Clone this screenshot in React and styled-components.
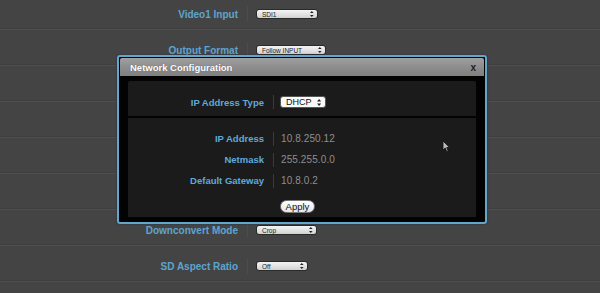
import styled, { createGlobalStyle } from "styled-components";

const GlobalStyle = createGlobalStyle`
  html, body {
    margin: 0;
    padding: 0;
    background: #444444;
  }
  body {
    font-family: "Liberation Sans", Arial, sans-serif;
  }
`;

const Page = styled.div`
  position: relative;
  width: 600px;
  height: 293px;
  overflow: hidden;
  background: #444444;
`;

const RowList = styled.div`
  margin-top: -6px;
`;

const Row = styled.div`
  display: flex;
  align-items: center;
  box-sizing: border-box;
  height: 36px;
  padding-top: 5px;
  border-bottom: 1px solid #4e4e4e;
  box-shadow: inset 0 -1px 0 #3f3f3f;
`;

const Label = styled.div`
  width: 238px;
  text-align: right;
  font-size: 10px;
  font-weight: bold;
  color: #5ea4d0;
  white-space: nowrap;
`;

const Divider = styled.div`
  width: 1px;
  height: ${(p) => p.$h || 16}px;
  margin: 0 ${(p) => p.$right || 8}px 0 ${(p) => p.$left || 9}px;
  background: ${(p) => p.$color || "#4c4c4c"};
`;

const Select = styled.div`
  display: flex;
  align-items: center;
  justify-content: space-between;
  box-sizing: border-box;
  width: ${(p) => p.$w}px;
  height: 10px;
  padding: 0 3px 0 5px;
  border-radius: 3px;
  background: linear-gradient(#f4f4f4, #d2d2d2);
  border: 1px solid #2a2a2a;
  font-size: 6.5px;
  color: #222;
  white-space: nowrap;
`;

const Arrows = styled.svg`
  flex: none;
  display: block;
`;

function UpDown({ size = 6 }) {
  return (
    <Arrows width={size * 0.6} height={size} viewBox="0 0 6 10">
      <path d="M3 0 L6 3.5 L0 3.5 Z M3 10 L6 6.5 L0 6.5 Z" fill="#222" />
    </Arrows>
  );
}

const Modal = styled.div`
  position: absolute;
  left: 117px;
  top: 55px;
  width: 370px;
  height: 169px;
  box-sizing: border-box;
  border: 2px solid #62a6cc;
  border-radius: 3px;
  background: #030303;
  padding: 1px;
  box-shadow: 0 0 2px #1a3040;
`;

const TitleBar = styled.div`
  display: flex;
  align-items: center;
  justify-content: space-between;
  height: 18px;
  padding: 0 8px 0 10px;
  border-radius: 2px 2px 0 0;
  background: linear-gradient(#a0a0a0, #8a8a8a 60%, #808080);
  color: #fff;
  font-size: 9.5px;
  font-weight: bold;
  text-shadow: 0 0 1px #555;
`;

const Close = styled.span`
  color: #1e1e1e;
  font-size: 10px;
  font-weight: bold;
  text-shadow: none;
`;

const Body = styled.div`
  display: flex;
  flex-direction: column;
  gap: 2px;
  padding: 5px 8px 0;
`;

const Panel = styled.div`
  background: #1b1b1b;
  border-radius: ${(p) => (p.$top ? "2px 2px 0 0" : "0")};
  padding: ${(p) => p.$pad};
  box-sizing: border-box;
  height: ${(p) => p.$h}px;
`;

const FieldRow = styled.div`
  display: flex;
  align-items: center;
  height: ${(p) => p.$h || 21}px;
`;

const FieldLabel = styled.div`
  width: 136px;
  text-align: right;
  font-size: 9.5px;
  font-weight: bold;
  color: #5eaadb;
  white-space: nowrap;
`;

const Value = styled.div`
  font-size: 10px;
  color: #8e8e8e;
  letter-spacing: 0.1px;
`;

const TypeSelect = styled.div`
  display: flex;
  align-items: center;
  gap: 5px;
  box-sizing: border-box;
  height: 12px;
  padding: 0 4px 0 5px;
  border-radius: 3px;
  background: #fafafa;
  border: 1px solid #555;
  font-size: 9px;
  color: #111;
`;

const ApplyWrap = styled.div`
  padding: 5px 0 0 152px;
`;

const ApplyButton = styled.button`
  box-sizing: border-box;
  height: 13px;
  width: 35px;
  padding: 0;
  border: 1px solid #777;
  border-radius: 7px;
  background: linear-gradient(#ffffff, #e6e6e6);
  font-family: "Liberation Sans", Arial, sans-serif;
  font-size: 9.5px;
  color: #111;
  line-height: 11px;
`;

const Cursor = styled.svg`
  position: absolute;
  left: 442px;
  top: 140px;
`;

const rows = [
  { label: "Video1 Input", value: "SDI1", w: 62 },
  { label: "Output Format", value: "Follow INPUT", w: 70 },
  {},
  {},
  {},
  {},
  { label: "Downconvert Mode", value: "Crop", w: 61 },
  { label: "SD Aspect Ratio", value: "Off", w: 52 },
  {},
];

const fields = [
  ["IP Address", "10.8.250.12"],
  ["Netmask", "255.255.0.0"],
  ["Default Gateway", "10.8.0.2"],
];

export default function App() {
  return (
    <>
      <GlobalStyle />
      <Page>
        <RowList>
          {rows.map((r, i) => (
            <Row key={i}>
              {r.label && (
                <>
                  <Label>{r.label}</Label>
                  <Divider />
                  <Select $w={r.w}>
                    <span>{r.value}</span>
                    <UpDown />
                  </Select>
                </>
              )}
            </Row>
          ))}
        </RowList>

        <Modal>
          <TitleBar>
            <span>Network Configuration</span>
            <Close>x</Close>
          </TitleBar>
          <Body>
            <Panel $top $h={35} $pad="7px 0 0">
              <FieldRow $h={28}>
                <FieldLabel>IP Address Type</FieldLabel>
                <Divider $h={14} $left={9} $right={6} $color="#3a3a3a" />
                <TypeSelect>
                  <span>DHCP</span>
                  <UpDown size={7} />
                </TypeSelect>
              </FieldRow>
            </Panel>
            <Panel $h={99} $pad="10px 0 0">
              {fields.map(([label, value]) => (
                <FieldRow key={label}>
                  <FieldLabel>{label}</FieldLabel>
                  <Divider $h={14} $left={9} $right={7} $color="#3a3a3a" />
                  <Value>{value}</Value>
                </FieldRow>
              ))}
              <ApplyWrap>
                <ApplyButton>Apply</ApplyButton>
              </ApplyWrap>
            </Panel>
          </Body>
        </Modal>

        <Cursor width="9" height="13" viewBox="0 0 9 13">
          <path
            d="M1 1 L1 10 L3.2 8 L4.8 11.6 L6.2 11 L4.7 7.5 L7.6 7.5 Z"
            fill="#b8b8b8"
            stroke="#111"
            strokeWidth="0.8"
          />
        </Cursor>
      </Page>
    </>
  );
}
